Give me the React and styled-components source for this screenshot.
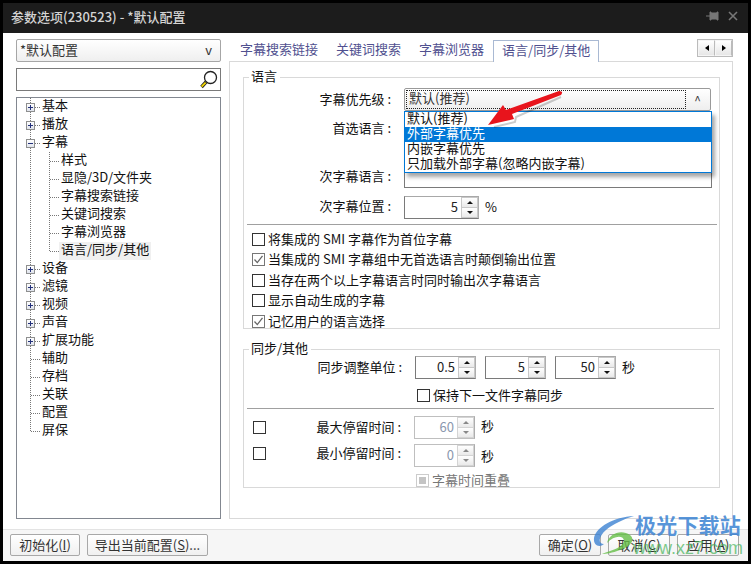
import React from "react";
import styled, { createGlobalStyle } from "styled-components";

const Global = createGlobalStyle`
  html, body { margin: 0; padding: 0; background: #000; }
  * { box-sizing: border-box; }
  body { font-family: "Noto Sans CJK SC", "Liberation Sans", sans-serif; font-size: 13px; color: #111; }
`;
const Win = styled.div`
  width: 751px; height: 564px; background: #000; padding: 3px 3px 3px 3px;
  position: relative; overflow: hidden; display: flex; flex-direction: column;
`;
const Title = styled.div`
  height: 30px; background: #1c1c1c; display: flex; align-items: center; padding: 0 9px 4px 8px;
  color: #d4d4d4; font-size: 13px; font-weight: 500;
`;
const TitleText = styled.div` flex: 1; `;
const Body = styled.div` flex: 1; min-height: 0; background: #fff; display: flex; padding: 6px 15px 10px 13px; gap: 8px; `;
const Left = styled.div` width: 205px; display: flex; flex-direction: column; gap: 6px; `;
const Profile = styled.div`
  height: 23px; border: 1px solid #a6a6a6; border-radius: 2px; background: linear-gradient(#fff, #efefef);
  display: flex; justify-content: space-between; align-items: center; padding: 0 8px 3px 3px; color: #333; line-height: 1;
`;
const Search = styled.div`
  height: 23px; border: 1px solid #7a7a7a; display: flex; justify-content: flex-end; align-items: center; padding-right: 2px; background: #fff;
`;
const Tree = styled.div` flex: 1; border: 1px solid #828790; padding: 0 0 0 4px; background: #fff; `;
const dotV = "repeating-linear-gradient(to bottom, #777 0 1px, transparent 1px 2px)";
const dotH = "repeating-linear-gradient(to right, #777 0 1px, transparent 1px 2px)";
const TreeRow = styled.div` height: 18px; display: flex; align-items: center; white-space: nowrap; `;
const Guide = styled.span`
  flex: none; height: 18px; display: flex; align-items: center; justify-content: flex-start; padding-left: 5px;
  width: ${p => p.$w}px;
  background-image: ${p => p.$v ? dotV : "none"}, ${p => p.$h ? dotH : "none"};
  background-repeat: no-repeat;
  background-size: 1px ${p => p.$end ? "9px" : "18px"}, ${p => p.$w - 9}px 1px;
  background-position: 9px 0, 10px 9px;
`;
const Expander = styled.span`
  width: 9px; height: 9px; border: 1px solid #8e8f8f; background: linear-gradient(#fff, #dfe3ec); position: relative; display: block; flex: none;
  &::before { content: ""; position: absolute; left: 1px; top: 3px; width: 5px; height: 1px; background: #23317a; }
  &::after { content: ""; display: ${p => p.$open ? "none" : "block"}; position: absolute; left: 3px; top: 1px; width: 1px; height: 5px; background: #23317a; }
`;
const TreeLabel = styled.span` height: 18px; line-height: 14px; padding: 0 2px 4px; background: ${p => p.$sel ? "#f0f0f0" : "transparent"}; `;
const Right = styled.div` flex: 1; display: flex; flex-direction: column; min-width: 0; `;
const TabBar = styled.div` height: 22px; display: flex; align-items: flex-end; position: relative; padding-left: 2px; `;
const Tab = styled.div`
  height: 20px; line-height: 16px; color: #50508f; padding: 0 9px;
  ${p => p.$active ? "border: 1px solid #a9b9d3; border-bottom: none; background: #fff; margin-bottom: -1px; height: 22px; z-index: 1; padding: 0 8px; line-height: 17px;" : ""}
`;
const TabArrows = styled.div` margin-left: auto; margin-bottom: 4px; display: flex; border: 1px solid #bbb; height: 18px; `;
const TabArrow = styled.div`
  width: 17px; background: linear-gradient(#fff, #e6e6e6); display: flex; align-items: center; justify-content: center;
  border: 1px solid #f5f5f5; border-right-color: #bbb;
  &::before { content: ""; border: 3.5px solid transparent; ${p => p.$dir === "l" ? "border-right: 4px solid #000; border-left: none;" : "border-left: 4px solid #000; border-right: none;"} }
`;
const Panel = styled.div` flex: 1; border: 1px solid #d9d9d9; padding: 7px 12px 0 13px; display: flex; flex-direction: column; `;
const Group = styled.fieldset` margin: 0; border: 1px solid #d9d9d9; padding: 0 0 0 3px; min-width: 0; display: block; height: ${p => p.$h}px; margin-top: ${p => p.$mt || 0}px; `;
const Legend = styled.legend` margin-left: 2px; padding: 0 3px 2px 2px; line-height: 14px; font-size: 13px; `;
const FormRow = styled.div` display: flex; align-items: center; height: ${p => p.$h || 22}px; margin-top: ${p => p.$mt || 0}px; `;
const Label = styled.div` width: ${p => p.$w || 144}px; flex: none; text-align: right; white-space: nowrap; padding-bottom: ${p => p.$pb ?? 3}px; `;
const FieldWrap = styled.div` position: relative; margin-left: 13px; `;
const Combo = styled.div`
  width: 307px; height: 23px; border: 1px solid #9a9a9a; border-radius: 2px; background: linear-gradient(#fff, #eeeeee); padding: 1px; display: flex;
`;
const ComboText = styled.div` flex: 1; border: 1px dotted #222; padding-left: 2px; line-height: 14px; color: #333; `;
const ComboArrow = styled.div` width: 23px; text-align: center; color: #333; font-size: 12px; line-height: 20px; `;
const Drop = styled.div`
  position: absolute; left: 0; top: 23px; width: 308px; height: 62px; background: #fff; border: 1px solid #0078d7;
  box-shadow: 3px 4px 4px rgba(0,0,0,.35); z-index: 3;
`;
const DropItem = styled.div` height: 15px; line-height: 12px; padding-left: 2px; white-space: nowrap; color: ${p => p.$on ? "#fff" : "#111"}; background: ${p => p.$on ? "#0078d7" : "transparent"}; `;
const TextInput = styled.div` width: 308px; height: 22px; border: 1px solid #7a7a7a; background: #fff; `;
const SpinBox = styled.div`
  width: ${p => p.$w}px; height: 23px; flex: none; display: flex; margin-left: ${p => p.$ml || 0}px;
  border: 1px solid ${p => p.$off ? "#bfbfbf" : "#7a7a7a"}; border-right-color: #adadad; border-top-color: ${p => p.$off ? "#bfbfbf" : "#a8a8a8"};
`;
const SpinVal = styled.div` flex: 1; text-align: right; padding-right: 3px; line-height: 19px; color: ${p => p.$off ? "#8a97ae" : "#222"}; `;
const SpinBtns = styled.div` width: 17px; display: flex; flex-direction: column; background: ${p => p.$off ? "#d4d4d4" : "#c8c8c8"}; padding: 1px; gap: 1px; `;
const SpinBtn = styled.div`
  flex: 1; background: linear-gradient(#fff, #e9e9e9); display: flex; align-items: center; justify-content: center;
  &::before { content: ""; border: 3px solid transparent; border-top: none; border-bottom: 3px solid ${p => p.$off ? "#888" : "#111"}; transform: ${p => p.$down ? "rotate(180deg)" : "none"}; }
`;
const Sep = styled.div` height: 1px; background: #a0a0a0; margin: ${p => p.$m}; width: ${p => p.$w}px; `;
const CheckRow = styled.div` display: flex; align-items: center; flex: none; height: ${p => p.$h || 20.5}px; margin-top: ${p => p.$mt || 0}px; padding-left: ${p => p.$pl || 5}px; padding-bottom: ${p => p.$pb || 0}px; gap: 3px; white-space: nowrap; color: ${p => p.$off ? "#777" : "#111"}; `;
const CheckText = styled.span` padding-bottom: 2px; `;
const Box = styled.span`
  width: 13px; height: 13px; flex: none; border: 1px solid ${p => p.$checked ? "#777" : p.$off ? "#ccc" : "#333"}; background: #fff; display: flex; align-items: center; justify-content: center;
`;
const Mark = styled.span` width: 7px; height: 7px; background: #c4c4c4; display: block; `;
const Unit = styled.div` margin-left: ${p => p.$ml || 6}px; white-space: nowrap; padding-bottom: ${p => p.$pb ?? 2}px; `;
const Footer = styled.div`
  height: 32px; flex: none; background: #f6f6f6; border-top: 1px solid #e3e3e3; display: flex; align-items: center; padding: 0 9px 2px 7px; gap: 7px;
`;
const Btn = styled.div`
  width: ${p => p.$w}px; height: 22px; border: 1px solid #a8a8a8; border-radius: 2px; background: linear-gradient(#fff, #f0f0f0); text-align: center; line-height: 19px; color: #333; white-space: nowrap;
  margin-left: ${p => p.$auto ? "auto" : "0"};
`;
const U = styled.span` text-decoration: underline; `;
const Overlay = styled.svg` position: absolute; left: ${p => p.$x}px; top: ${p => p.$y}px; z-index: 5; pointer-events: none; `;
const MarkBrand = styled.div` position: absolute; left: 635px; top: 511px; z-index: 6; font-size: 21px; font-weight: 700; line-height: 26px; color: rgba(58,130,210,.85); white-space: nowrap; letter-spacing: .2px; `;
const MarkUrl = styled.div` position: absolute; left: 633px; top: 538px; z-index: 6; font-family: "Liberation Sans", sans-serif; font-size: 18px; line-height: 20px; color: rgba(70,180,90,.7); white-space: nowrap; `;

const Spin = ({ w, v, off, ml }) => (
  <SpinBox $w={w} $off={off} $ml={ml}>
    <SpinVal $off={off}>{v}</SpinVal>
    <SpinBtns $off={off}><SpinBtn $off={off} /><SpinBtn $down $off={off} /></SpinBtns>
  </SpinBox>
);
const Check = ({ checked }) => (
  <Box $checked={checked}>
    {checked && <svg width="11" height="11" viewBox="0 0 11 11"><path d="M1.5 5.5 L4.3 8.6 L9.5 1.8" fill="none" stroke="#666" strokeWidth="1.3" /></svg>}
  </Box>
);
const top = [
  ["基本", 1], ["播放", 1], ["字幕", 2],
  ["样式", 0, 1], ["显隐/3D/文件夹", 0, 1], ["字幕搜索链接", 0, 1], ["关键词搜索", 0, 1], ["字幕浏览器", 0, 1], ["语言/同步/其他", 0, 2],
  ["设备", 1], ["滤镜", 1], ["视频", 1], ["声音", 1], ["扩展功能", 1], ["辅助", 0], ["存档", 0], ["关联", 0], ["配置", 0], ["屏保", 0, 0, 1],
];
export default function App() {
  return (
    <Win>
      <Global />
      <Title>
        <TitleText>参数选项(230523) - *默认配置</TitleText>
        <svg width="34" height="14" viewBox="0 0 34 14">
          <path d="M1 7H5M5 3H6V11H5ZM6 4H12V10H6ZM12 3H13V11H12Z" fill="#777" stroke="#777" />
          <path d="M24 3L32 11M32 3L24 11" stroke="#777" strokeWidth="1.6" fill="none" />
        </svg>
      </Title>
      <Body>
        <Left>
          <Profile><span>*默认配置</span><span>v</span></Profile>
          <Search>
            <svg width="18" height="19" viewBox="0 0 18 19">
              <circle cx="10.5" cy="7.5" r="6" fill="#fff" stroke="#222" strokeWidth="1.3" />
              <path d="M6 12L1.5 17" stroke="#222" strokeWidth="3.4" />
              <path d="M5.6 12.6L1.6 16.6" stroke="#f5d800" strokeWidth="1.8" />
            </svg>
          </Search>
          <Tree>
            {top.map(([t, exp, child, end]) => (
              <TreeRow key={t}>
                {child ? (
                  <>
                    <Guide $w={19} $v />
                    <Guide $w={19} $v $h $end={child === 2} />
                    <TreeLabel $sel={child === 2}>{t}</TreeLabel>
                  </>
                ) : (
                  <>
                    <Guide $w={19} $v $h $end={end}>
                      {exp ? <Expander $open={exp === 2} /> : null}
                    </Guide>
                    <TreeLabel>{t}</TreeLabel>
                  </>
                )}
              </TreeRow>
            ))}
          </Tree>
        </Left>
        <Right>
          <TabBar>
            <Tab>字幕搜索链接</Tab><Tab>关键词搜索</Tab><Tab>字幕浏览器</Tab><Tab $active>语言/同步/其他</Tab>
            <TabArrows><TabArrow $dir="l" /><TabArrow $dir="r" /></TabArrows>
          </TabBar>
          <Panel>
            <Group $h={260}>
              <Legend>语言</Legend>
              <FormRow $h={23} $mt={3}>
                <Label>字幕优先级 :</Label>
                <FieldWrap>
                  <Combo><ComboText>默认(推荐)</ComboText><ComboArrow>^</ComboArrow></Combo>
                  <Drop>
                    <DropItem>默认(推荐)</DropItem>
                    <DropItem $on>外部字幕优先</DropItem>
                    <DropItem>内嵌字幕优先</DropItem>
                    <DropItem>只加载外部字幕(忽略内嵌字幕)</DropItem>
                  </Drop>
                </FieldWrap>
              </FormRow>
              <FormRow $mt={6}><Label $pb={1}>首选语言 :</Label><FieldWrap><TextInput /></FieldWrap></FormRow>
              <FormRow $mt={27}><Label>次字幕语言 :</Label><FieldWrap><TextInput /></FieldWrap></FormRow>
              <FormRow $mt={8}>
                <Label>次字幕位置 :</Label>
                <FieldWrap><Spin w={75} v="5" /></FieldWrap>
                <Unit>%</Unit>
              </FormRow>
              <Sep $m="6px 0 4px 0" $w={470} />
              <CheckRow><Check /><CheckText>将集成的 SMI 字幕作为首位字幕</CheckText></CheckRow>
              <CheckRow><Check checked /><CheckText>当集成的 SMI 字幕组中无首选语言时颠倒输出位置</CheckText></CheckRow>
              <CheckRow><Check /><CheckText>当存在两个以上字幕语言时同时输出次字幕语言</CheckText></CheckRow>
              <CheckRow><Check /><CheckText>显示自动生成的字幕</CheckText></CheckRow>
              <CheckRow><Check checked /><CheckText>记忆用户的语言选择</CheckText></CheckRow>
            </Group>
            <Group $h={147} $mt={12}>
              <Legend>同步/其他</Legend>
              <FormRow $h={23} $mt={-1}>
                <Label $w={155}>同步调整单位 :</Label>
                <FieldWrap><Spin w={61} v="0.5" /></FieldWrap>
                <Spin w={61} v="5" ml={9} />
                <Spin w={61} v="50" ml={9} />
                <Unit>秒</Unit>
              </FormRow>
              <CheckRow $h={20} $mt={6} $pl={170}><Check /><CheckText>保持下一文件字幕同步</CheckText></CheckRow>
              <Sep $m="3px 0 7px 0" $w={467} />
              <FormRow $h={23}>
                <CheckRow $h={23} $pl={6}><Check /></CheckRow>
                <Label $w={135}>最大停留时间 :</Label>
                <FieldWrap><Spin w={61} v="60" off /></FieldWrap>
                <Unit $pb={4}>秒</Unit>
              </FormRow>
              <FormRow $h={23} $mt={5}>
                <CheckRow $h={23} $pl={6} $pb={5}><Check /></CheckRow>
                <Label $w={135} $pb={7}>最小停留时间 :</Label>
                <FieldWrap><Spin w={61} v="0" off /></FieldWrap>
                <Unit $pb={1}>秒</Unit>
              </FormRow>
              <CheckRow $h={26} $pl={169} $off>
                <Box $off><Mark /></Box><CheckText>字幕时间重叠</CheckText>
              </CheckRow>
            </Group>
          </Panel>
        </Right>
      </Body>
      <Footer>
        <Btn $w={70}>初始化(<U>I</U>)</Btn>
        <Btn $w={121}>导出当前配置(<U>S</U>)...</Btn>
        <Btn $w={62} $auto>确定(<U>O</U>)</Btn>
        <Btn $w={62}>取消(<U>C</U>)</Btn>
        <Btn $w={62}>应用(<U>A</U>)</Btn>
      </Footer>
      <Overlay $x={482} $y={88} width="84" height="42" viewBox="0 0 84 42">
        <path d="M79 7 L30 26 L32 31 L6 37 L21 17 L24 22 L77 3 Q82 3 79 7 Z" fill="#e8141c" />
        <path d="M79 9 L34 29 L33 34 L12 39" stroke="rgba(0,0,0,.2)" strokeWidth="2" fill="none" />
      </Overlay>
      <Overlay $x={592} $y={513} width="48" height="44" viewBox="0 0 48 44">
        <path d="M42 3 C22 4 4 14 2 25 C1 33 8 35 12 31 C6 31 6 24 14 17 C21 11 32 6 42 3Z" fill="rgba(60,130,210,.8)" />
        <path d="M15 30 C17 20 30 16 38 22 C44 27 38 34 28 37 C20 40 14 41 10 41 C20 37 30 35 32 28 C32 22 22 22 15 30Z" fill="rgba(100,190,70,.8)" />
      </Overlay>
      <MarkBrand>极光下载站</MarkBrand>
      <MarkUrl>www.xz7.com</MarkUrl>
    </Win>
  );
}
